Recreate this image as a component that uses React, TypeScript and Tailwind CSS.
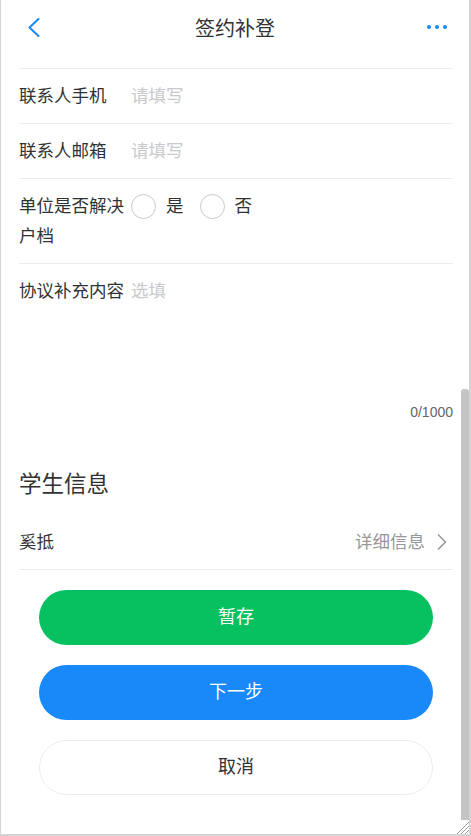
const fields = [
    { label: '联系人手机', placeholder: '请填写' },
    { label: '联系人邮箱', placeholder: '请填写' },
];

function Radio({ text }: { text: string }) {
    return (
        <div className="mr-[16px] flex items-center">
            <span className="h-[25px] w-[25px] rounded-full border border-[#c8c9cc]" />
            <span className="ml-[10px]">{text}</span>
        </div>
    );
}

export default function App() {
    return (
        <div className="relative h-[836px] w-[471px] overflow-hidden border-r-2 border-b-2 border-l border-[#d4d4d4] bg-white font-['Liberation_Sans','Noto_Sans_CJK_SC',sans-serif] text-[#323233]">
            {/* Nav bar */}
            <div className="relative flex h-[58px] items-center justify-center">
                <svg className="absolute top-[18px] left-[27px] h-[19px] w-[12px]" viewBox="0 0 12 19" fill="none">
                    <polyline points="10.5,1 1.5,9.5 10.5,18" stroke="#1989fa" strokeWidth="2" strokeLinecap="round" strokeLinejoin="round" />
                </svg>
                <span className="text-[20px]">签约补登</span>
                <div className="absolute top-[25px] right-[22px] flex gap-[4px]">
                    <span className="h-[4px] w-[4px] rounded-full bg-[#1989fa]" />
                    <span className="h-[4px] w-[4px] rounded-full bg-[#1989fa]" />
                    <span className="h-[4px] w-[4px] rounded-full bg-[#1989fa]" />
                </div>
            </div>

            <div className="pt-[10px] pr-[16px] pl-[18px] text-[17.5px]">
                {fields.map((f) => (
                    <div key={f.label} className="flex border-t border-[#ebedf0] py-[12px] leading-[30px]">
                        <span className="w-[112px] shrink-0">{f.label}</span>
                        <span className="text-[#c8c9cc]">{f.placeholder}</span>
                    </div>
                ))}

                <div className="flex border-t border-[#ebedf0] py-[12px] leading-[30px]">
                    <span className="w-[112px] shrink-0 pr-[6px]">单位是否解决户档</span>
                    <div className="flex h-[30px] items-center">
                        <Radio text="是" />
                        <Radio text="否" />
                    </div>
                </div>

                {/* Supplement textarea */}
                <div className="border-t border-[#ebedf0] pt-[12px] pb-[12px] leading-[30px]">
                    <div className="flex h-[126px]">
                        <span className="w-[112px] shrink-0">协议补充内容</span>
                        <span className="text-[#c8c9cc]">选填</span>
                    </div>
                    <div className="text-right text-[14px] leading-[20px] text-[#646566]">0/1000</div>
                </div>

                <div className="pt-[36px] pb-[15px] text-[22.5px] leading-[30px] text-[#323233]">学生信息</div>

                <div className="flex items-center border-b border-[#ebedf0] py-[12px] leading-[30px]">
                    <span className="flex-1">奚抵</span>
                    <span className="text-[#969799]">详细信息</span>
                    <svg className="mr-[6px] ml-[12px] h-[16px] w-[10px]" viewBox="0 0 10 16" fill="none">
                        <polyline points="1.5,1 8.5,8 1.5,15" stroke="#969799" strokeWidth="1.6" strokeLinecap="round" strokeLinejoin="round" />
                    </svg>
                </div>
            </div>

            {/* Buttons */}
            <div className="mt-[20px] mr-[36px] ml-[38px] flex flex-col gap-[20px] text-[18px]">
                <button className="h-[55px] rounded-full bg-[#07c160] text-white">暂存</button>
                <button className="h-[55px] rounded-full bg-[#1989fa] text-white">下一步</button>
                <button className="h-[55px] rounded-full border border-[#ebedf0] bg-white text-[#323233]">取消</button>
            </div>

            {/* Scrollbar thumb + resize corner */}
            <div className="absolute top-[389px] right-0 h-[431px] w-[8px] rounded-t-[3px] bg-[#c4c4c4]" />
            <svg className="absolute right-0 bottom-0 h-[14px] w-[14px]" viewBox="0 0 14 14">
                <line x1="2" y1="14" x2="14" y2="2" stroke="#9a9a9a" strokeWidth="1" />
                <line x1="6" y1="14" x2="14" y2="6" stroke="#9a9a9a" strokeWidth="1" />
                <line x1="10" y1="14" x2="14" y2="10" stroke="#9a9a9a" strokeWidth="1" />
            </svg>
        </div>
    );
}
